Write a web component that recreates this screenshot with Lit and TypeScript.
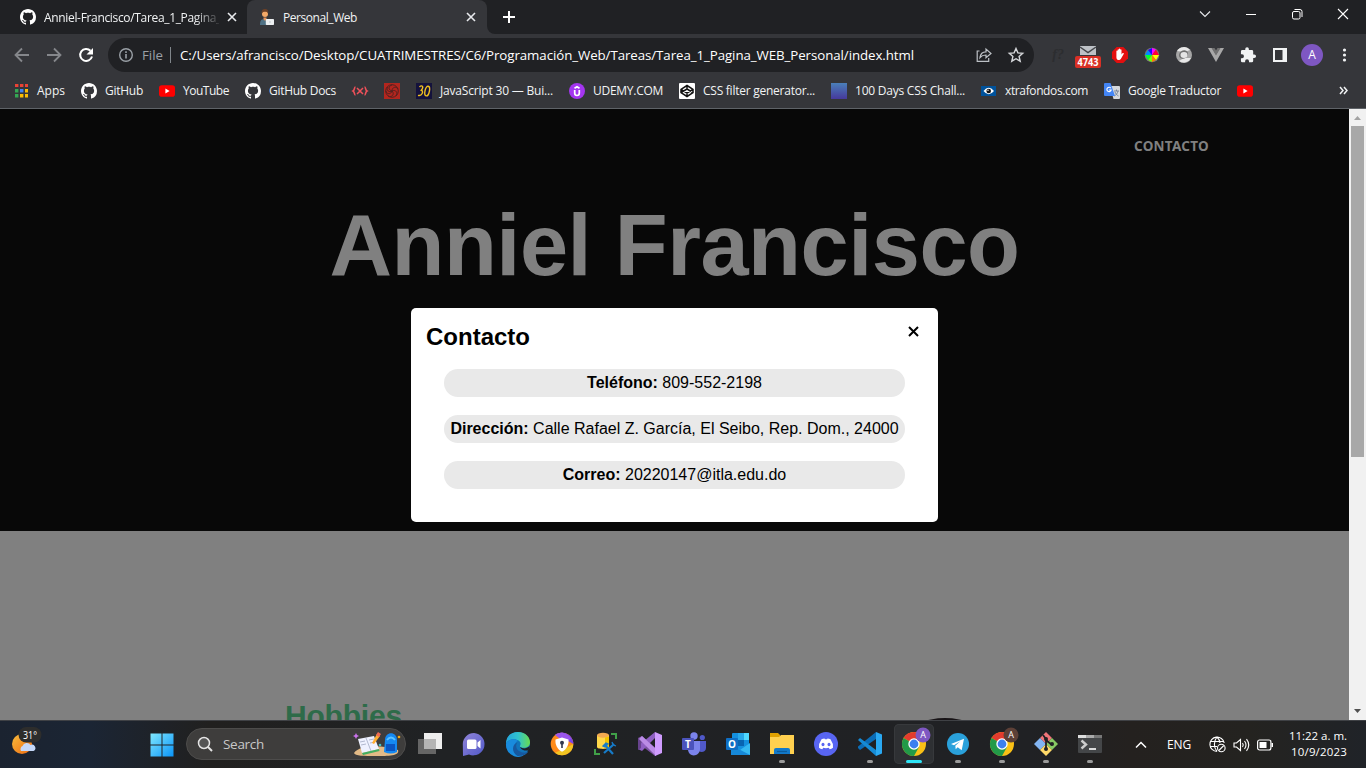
import { LitElement, html, svg, css } from "lit";
import { customElement, property } from "lit/decorators.js";

/* A one-line label that tracks its letters to fill a given width. */
@customElement("fit-label")
class FitLabel extends LitElement {
  @property() text = "";
  @property({ type: Number }) w = 0;
  static styles = css`
    :host { display: block; flex: none; white-space: pre; }
    span { display: inline-block; }
  `;
  render() {
    return html`<span>${this.text}</span>`;
  }
  updated() {
    const span = this.renderRoot.querySelector("span") as HTMLElement;
    this.style.width = `${this.w}px`;
    span.style.letterSpacing = "0px";
    const natural = span.getBoundingClientRect().width;
    span.style.letterSpacing = `${(this.w - natural) / this.text.length}px`;
  }
}

const github = svg`<svg width="16" height="16" viewBox="0 0 16 16"><path fill="#fff" d="M8 0C3.58 0 0 3.58 0 8c0 3.54 2.29 6.53 5.47 7.59.4.07.55-.17.55-.38 0-.19-.01-.82-.01-1.49-2.01.37-2.53-.49-2.69-.94-.09-.23-.48-.94-.82-1.13-.28-.15-.68-.52-.01-.53.63-.01 1.08.58 1.23.82.72 1.21 1.87.87 2.33.66.07-.52.28-.87.51-1.07-1.78-.2-3.64-.89-3.64-3.95 0-.87.31-1.59.82-2.15-.08-.2-.36-1.02.08-2.12 0 0 .67-.21 2.2.82.64-.18 1.32-.27 2-.27s1.36.09 2 .27c1.53-1.04 2.2-.82 2.2-.82.44 1.1.16 1.92.08 2.12.51.56.82 1.27.82 2.15 0 3.07-1.87 3.75-3.65 3.95.29.25.54.73.54 1.48 0 1.07-.01 1.93-.01 2.2 0 .21.15.46.55.38A8.01 8.01 0 0 0 16 8c0-4.42-3.58-8-8-8z"/></svg>`;
const youtube = svg`<svg width="16" height="16" viewBox="0 0 16 16"><rect y="2.3" width="16" height="11.4" rx="2.8" fill="#f00"/><path d="M6.4 5.6v4.8L10.600 8z" fill="#fff"/></svg>`;
const apps = svg`<svg width="16" height="16" viewBox="0 0 16 16">
  <path fill="#ea4335" d="M2 1h3.400v3H2zM7 1h3.400v3H7zM12 1h3v3h-3z"/><path fill="#34a853" d="M2 6h3.400v3.400H2zM2 11h3.400v3.400H2z"/><path fill="#4285f4" d="M7 6h3.400v3.400H7z"/><path fill="#fbbc05" d="M12 6h3v3.400h-3zM7 11h3.400v3.400H7zM12 11h3v3.400h-3z"/></svg>`;
const brackets = svg`<svg width="16" height="16" viewBox="0 0 16 16" fill="none" stroke="#f0515a" stroke-width="1.500"><path d="M3.500 4C2 4 3 7 1 8c2 1 1 4 2.500 4M12.500 4C14 4 13 7 15 8c-2 1-1 4-2.500 4M5 5l6 6M11 5l-6 6"/></svg>`;
const swirl = svg`<svg width="16" height="16" viewBox="0 0 16 16"><rect width="16" height="16" fill="#b3261e"/><g fill="none" stroke="#54211f" stroke-width="1"><circle cx="8" cy="8" r="6.300"/><path d="M8 8C4 7 4 3 8 2M8 8c0-4 4-5 6-2M8 8c4-2 6 2 4 5M8 8c3 3 0 7-4 5M8 8c-1 4-6 3-6 0M8 8C5 10 2 7 3.500 4"/></g></svg>`;
const thirty = svg`<svg width="16" height="16" viewBox="0 0 16 16"><rect width="16" height="16" fill="#14123c"/><g fill="none" stroke="#f0c020" stroke-width="1.400"><path d="M3.500 4c2-2.500 5-.6 1.800 3.300C8 8 6 13.500 2 12.300"/><ellipse cx="11.200" cy="8" rx="2.200" ry="4.900" transform="rotate(12 11 8)"/></g></svg>`;
const udemy = svg`<svg width="16" height="16" viewBox="0 0 16 16"><circle cx="8" cy="8" r="8" fill="#a435f0"/><path d="M5.500 5.200L8 3.700l2.500 1.500M5.700 7v3c0 3.300 4.600 3.300 4.600 0V7" fill="none" stroke="#fff" stroke-width="1.700"/></svg>`;
const codepen = svg`<svg width="16" height="16" viewBox="0 0 16 16"><rect width="16" height="16" rx="1" fill="#fff"/><path d="M8 2.500l6 3.800v3.400l-6 3.800-6-3.800V6.300zM2 6.300l6 3.700 6-3.700M2 9.700L8 6l6 3.700M8 2.500V6M8 10v3.500" fill="none" stroke="#111" stroke-width="1.500"/></svg>`;
const gradient = svg`<svg width="16" height="16"><defs><linearGradient id="hd" x1="0" y1="0" x2="0" y2="1"><stop stop-color="#4a7fb9"/><stop offset="1" stop-color="#46399c"/></linearGradient></defs><rect width="16" height="16" fill="url(#hd)"/></svg>`;
const eye = svg`<svg width="16" height="16" viewBox="0 0 16 16"><rect y="3" width="15" height="10" fill="#00529b"/><path d="M2.500 8q5.200-6.500 10.500 0-5.300 6.500-10.500 0" fill="#fff"/><circle cx="7.700" cy="8" r="2.300" fill="#111"/><circle cx="7" cy="7.300" r=".7" fill="#fff"/></svg>`;
const translate = svg`<svg width="16" height="16" viewBox="0 0 16 16"><path d="M6 3h9a1 1 0 0 1 1 1v11a1 1 0 0 1-1 1H9.500z" fill="#d5d8dc"/><path d="M10 8h5M12.500 6.500V8M14 8c-.5 2.500-2 4-3.500 5M11 9c.7 2 2 3 3.500 4" stroke="#6f7f94" stroke-width=".9" fill="none"/><path d="M1 0h5.500L11 13H1a1 1 0 0 1-1-1V1a1 1 0 0 1 1-1z" fill="#4385f5"/><path d="M7 5.300A2.200 2.200 0 1 0 7.200 7H5" fill="none" stroke="#fff" stroke-width="1.100"/></svg>`;

const bookmarks: [unknown, string, number][] = [
  [apps, "Apps", 28], [github, "GitHub", 38], [youtube, "YouTube", 46], [github, "GitHub Docs", 67],
  [brackets, "", 0], [swirl, "", 0], [thirty, "JavaScript 30 — Bui...", 113], [udemy, "UDEMY.COM", 70],
  [codepen, "CSS filter generator...", 112], [gradient, "100 Days CSS Chall...", 110],
  [eye, "xtrafondos.com", 83], [translate, "Google Traductor", 93], [youtube, "", 0],
];

const cross = svg`<svg width="10" height="10" viewBox="0 0 10 10"><path d="M1 1l8 8M9 1L1 9" stroke="#e8eaed" stroke-width="1.600"/></svg>`;
const person = svg`<svg width="16" height="16" viewBox="0 0 16 16"><path d="M1 16c0-4 1-6 4.500-6S10 12 10 16z" fill="#4f7185"/><circle cx="6" cy="5" r="3" fill="#f3a867"/><path d="M2.800 5C2 1 4 0 6 0s4 1 3 4.500C8.600 3 8 2.700 6 2.700S3.300 3 2.800 5" fill="#6b4027"/><path d="M4.500 8.500h3V10L6 12l-1.500-2z" fill="#e8955a"/><rect x="6.800" y="10" width="8.200" height="6" rx=".7" fill="#eceff1"/><circle cx="11" cy="13" r=".8" fill="#b7c0c5"/></svg>`;

const extensions = [
  svg`<svg width="32" height="24" viewBox="0 0 32 24"><path d="M8 3h16v9H8z" fill="#bdc1c6"/><path d="M8 4l8 5.500L24 4" fill="none" stroke="#44464a" stroke-width="1.500"/><rect x="3" y="13" width="26" height="12" rx="2" fill="#d93025"/><text x="16" y="23" text-anchor="middle" font-size="9.800" font-weight="700" textLength="21" lengthAdjust="spacingAndGlyphs" fill="#fff">4743</text></svg>`,
  svg`<svg width="32" height="24" viewBox="0 0 32 24"><path d="M12.700 4h6.600L24 8.700v6.600L19.300 20h-6.600L8 15.300V8.700z" fill="#e30f0f"/><path d="M12.400 12V8.300c0-1 1.200-1 1.200 0V7c0-1 1.300-1 1.300 0v-.7c0-1 1.300-1 1.300 0V7c0-1 1.300-1 1.300 0v4.500l.9-1.200c.9-.8 1.700 0 1.300.7l-2.300 4c-.7 1.500-1.600 2-2.800 2-1.900 0-2.200-1.500-2.200-3z" fill="#fff"/></svg>`,
  svg`<svg width="32" height="24" viewBox="0 0 32 24"><circle cx="16" cy="12" r="7.300" fill="#777"/><g><path d="M16 12V5l4 1.500z" fill="#f0f"/><path d="M16 12l4-5.500 3 5.500z" fill="#f03"/><path d="M16 12h7l-3 5z" fill="#ff0"/><path d="M16 12l4 5-4 2z" fill="#ff7b00"/><path d="M16 12v7l-4-2z" fill="#7f0"/><path d="M16 12l-4 5-3-5z" fill="#0f3"/><path d="M16 12H9l3-5z" fill="#08f"/><path d="M16 12l-4-5 4-2z" fill="#20f"/></g></svg>`,
  svg`<svg width="32" height="24" viewBox="0 0 32 24"><circle cx="16" cy="12" r="8" fill="#a5a5a5"/><path d="M9 8a8 8 0 0 1 13-1L17 9zM23 15a8 8 0 0 1-12 3l5-3z" fill="#e8e8e8"/><ellipse cx="15.500" cy="11.500" rx="4.800" ry="4" transform="rotate(-35 15.500 11.500)" fill="#707070"/><ellipse cx="16" cy="12" rx="3.500" ry="3" fill="#e4e4e4"/></svg>`,
  svg`<svg width="32" height="24" viewBox="0 0 32 24"><path d="M8 5h4l4 6.500L20 5h4l-8 14z" fill="#a8a8a8"/><path d="M11.500 5h3L16 7.500 17.500 5h3L16 12.500z" fill="#717171"/></svg>`,
  svg`<svg width="32" height="24" viewBox="0 0 32 24"><path transform="translate(7.500 3.500) scale(.72)" d="M20.500 11H19V7a2 2 0 0 0-2-2h-4V3.500a2.500 2.500 0 0 0-5 0V5H4a2 2 0 0 0-2 2v3.800h1.500a2.700 2.700 0 0 1 0 5.400H2V20a2 2 0 0 0 2 2h3.800v-1.500a2.700 2.700 0 0 1 5.400 0V22H17a2 2 0 0 0 2-2v-4h1.500a2.500 2.500 0 0 0 0-5z" fill="#f1f3f4"/></svg>`,
  svg`<svg width="32" height="24" viewBox="0 0 32 24"><path d="M9 5h14v14H9z" fill="#f1f3f4"/><path d="M11 7h7.500v10H11z" fill="#35363a"/></svg>`,
  svg`<svg width="32" height="24" viewBox="0 0 32 24"><circle cx="16" cy="12" r="11" fill="#7e57c2"/><text x="16" y="16.300" text-anchor="middle" font-size="12" fill="#fff">A</text></svg>`,
  svg`<svg width="32" height="24" viewBox="0 0 32 24" fill="#f1f3f4"><circle cx="16.500" cy="7" r="1.600"/><circle cx="16.500" cy="12" r="1.600"/><circle cx="16.500" cy="17" r="1.600"/></svg>`,
];

const chrome = (badge: string) => svg`<svg width="32" height="32" viewBox="0 0 32 32">
  <circle cx="16" cy="16" r="12" fill="#fbc116"/><path d="M16 16L5.600 10A12 12 0 0 1 26.400 10z" fill="#e33b2e"/><path d="M5.600 10A12 12 0 0 0 16 28l5-9-5-3z" fill="#229a48"/>
  <path d="M16 10.500h10.600" stroke="#e33b2e" stroke-width="1.500"/><circle cx="16" cy="16" r="5.700" fill="#fff"/><circle cx="16" cy="16" r="4.400" fill="#3c7ff0"/>
  <circle cx="25" cy="7" r="7.500" fill="${badge}"/><text x="25" y="10.300" font-size="9" text-anchor="middle" fill="#fff">A</text></svg>`;

const t = (body: unknown) => svg`<svg width="32" height="32" viewBox="0 0 32 32">${body}</svg>`;
/* state: 0 = closed, 1 = running, 2 = focused */
const tasks: [unknown, number][] = [
  [t(svg`<rect x="10" y="5" width="18" height="16" fill="#eeeeee"/><rect x="4" y="11" width="18" height="15" fill="#656565"/><path d="M10 11h12v10H10z" fill="#b4b4b4"/>`), 0],
  [t(svg`<defs><linearGradient id="ch" x1="0" x2="1" y2="1"><stop stop-color="#9184d8"/><stop offset="1" stop-color="#5059c9"/></linearGradient></defs><path d="M16 5a11.200 11.200 0 1 1-5 21.500L5 28l-.2-12A11.200 11.200 0 0 1 16 5z" fill="url(#ch)"/><rect x="9" y="11.500" width="9.500" height="9.500" rx="1.500" fill="#fff"/><path d="M19.500 14.500l3-2.500v8.500l-3-2.500z" fill="#fff"/>`), 0],
  [t(svg`<defs><linearGradient id="ed"><stop stop-color="#25a5dc"/><stop offset=".5" stop-color="#30c3cf"/><stop offset="1" stop-color="#68dc50"/></linearGradient></defs><circle cx="16" cy="16" r="12" fill="#1174ba"/><path d="M4 16C4 8 9 4 16 4c8 0 12 5.500 12 10.500 0 5-6 6.500-9.500 4.500-1.500-1 .5-1.500 0-4C18 11 7 8.500 4 16z" fill="url(#ed)"/><path d="M4 16c2-5 9-6 12-3-4 1-4 7-.5 10 3 2.500 7.500 2 10.500.5A12 12 0 0 1 4 16z" fill="#198bdd"/><path d="M15.500 14.500c-3 3-1 10 7 10 2 0 4-1 4-1-3 4-8 4.500-11 4.500-6-3-6-12 0-13.500z" fill="#17589f"/><path d="M18 19c3 2 6 2 10-1l-1.500 4.500c-4 .5-7-.5-8.500-3.500z" fill="#202224"/>`), 0],
  [t(svg`<circle cx="16" cy="16" r="11.300" fill="#ff8b1a"/><path d="M14 4.800A11.300 11.300 0 0 1 27.300 16l-7-4z" fill="#7c44e8"/><path d="M9 7c4-4 13-3 16 4l-8 2z" fill="#9b55ec"/><path d="M27.300 16A11.300 11.300 0 0 1 9 24.800L20 20z" fill="#f1c522"/><path d="M16 9.500l6.500 2c.5 5-1.500 9.500-6.500 12.300-5-2.800-7-7.300-6.500-12.300z" fill="#fff"/><circle cx="16" cy="14.800" r="2" fill="#303850"/><path d="M15.200 15h1.600v5h-1.600z" fill="#303850"/>`), 0],
  [t(svg`<path d="M7 7v12c0 2.500 12 2.500 12 0V7z" fill="#ffd84a"/><ellipse cx="13" cy="7.300" rx="6" ry="2.500" fill="#f2a950"/><path d="M15 9.500l4-1V19l-4 1z" fill="#f2c400"/><path d="M21 6h5v5M5 21v5h5" fill="none" stroke="#40a048" stroke-width="2"/><path d="M14 25l9-8M15 17l8 9" stroke="#167bc9" stroke-width="2.200"/><path d="M13 18l3-3 2 1-3 3zM22 14l1 3 3 1" stroke="#167bc9" fill="#167bc9" stroke-width="1.300"/>`), 0],
  [t(svg`<path d="M4 10l4-2 17 15-4 5L8 18l-4-2z" fill="#78509f"/><path d="M4 21l4 2 13-13V4L4 18z" fill="#8f5fc3"/><path d="M4 10l3 2v8l-3 2z" fill="#67438d"/><path d="M8 8l14 13v7L5 11z" fill="#bb8ce6"/><path d="M21 4l7 3v18l-7 3z" fill="#d09cff"/>`), 0],
  [t(svg`<circle cx="16" cy="8" r="3.700" fill="#7b83eb"/><circle cx="24.300" cy="9.500" r="2.600" fill="#5059c9"/><path d="M20 13h8v7c0 4-5 5-7 3z" fill="#5059c9"/><path d="M10 13h12v8c0 8-12 9-12 0z" fill="#7b83eb"/><rect x="4" y="10" width="12" height="12" rx="1" fill="#4b53bc"/><text x="10" y="19.700" text-anchor="middle" font-size="10" font-weight="700" fill="#fff">T</text>`), 0],
  [t(svg`<rect x="10" y="5" width="17" height="17" rx="1" fill="#1490df"/><path d="M16 5h6v7h-6z" fill="#28a8ea"/><path d="M22 5h5v7h-5z" fill="#50d9ff"/><path d="M10 12h12v6H10z" fill="#0864b1"/><path d="M28 15v12H9V17l9 5z" fill="#35b8f1"/><path d="M9 17l19 10H9z" fill="#1688d8"/><rect x="4" y="10" width="12" height="12" rx="1" fill="#0f6fc5"/><text x="10" y="19.700" text-anchor="middle" font-size="10" font-weight="700" fill="#fff">O</text>`), 0],
  [t(svg`<path d="M4 5h8l2 2v3H4z" fill="#e1a100"/><path d="M4 9h9l2-2h13v19H4z" fill="#ffd04f"/><path d="M8 26v-4q0-2 2-2h12q2 0 2 2v4z" fill="#1279ca"/><path d="M11 23.500h10" stroke="#0b5b9c" stroke-width="1.200"/>`), 1],
  [t(svg`<circle cx="16" cy="16" r="12" fill="#5865f2"/><path d="M11.500 11.300q1.500-.8 3-.9l.4.900h2.200l.4-.9q1.500.1 3 .9 3 4.300 2.500 8.500-1.500 1.200-3.300 1.500l-1-1.500q-2.700.7-5.400 0l-1 1.500q-1.800-.3-3.300-1.500-.5-4.200 2.500-8.500z" fill="#fff"/><ellipse cx="13" cy="16.500" rx="1.500" ry="1.700" fill="#5865f2"/><ellipse cx="19" cy="16.500" rx="1.500" ry="1.700" fill="#5865f2"/>`), 0],
  [t(svg`<path d="M22 4v7L6 22l-2-2v-1.500z" fill="#0b6db7"/><path d="M4 12l2-2 16 12v6z" fill="#168bd5"/><path d="M22 4l6 2.500v19L22 28z" fill="#2aa9f2"/>`), 1],
  [chrome("#7e57c2"), 2],
  [t(svg`<circle cx="16" cy="16" r="11" fill="#2aa1db"/><path d="M9 16l13-5.300-2.300 11.500-4-3-2 2-.4-3.500 5-4.500-6.300 4z" fill="#fff"/>`), 1],
  [chrome("#5d4037"), 1],
  [t(svg`<path d="M16 4l6 6-6 6-6-6z" fill="#f07478"/><path d="M10 10l6 6-6 6-6-6z" fill="#82b4f2"/><path d="M22 10l6 6-6 6-6-6z" fill="#87c963"/><path d="M16 16l6 6-6 6-6-6z" fill="#ffd968"/><path d="M13 7l3 4v11M16 12l6 5" fill="none" stroke="#202124" stroke-width="1.800"/><circle cx="16" cy="11" r="2" fill="#202124"/><circle cx="22" cy="16" r="2" fill="#202124"/><circle cx="16" cy="21" r="2" fill="#202124"/>`), 1],
  [t(svg`<rect x="4" y="7" width="24" height="18" rx="1" fill="#444648"/><path d="M4 7h8v3H4z" fill="#ddd"/><path d="M12 7h8v3h-8z" fill="#aaa"/><path d="M20 7h8v3h-8z" fill="#777"/><path d="M7.500 12.500l4.500 4-4.500 4" fill="none" stroke="#ccc" stroke-width="2.400"/><path d="M15 21h7" stroke="#fff" stroke-width="1.600"/>`), 1],
];

const weather = svg`<svg width="34" height="32" viewBox="0 0 34 32"><defs><linearGradient id="mo" x1="0" y1="0" x2="1" y2="1"><stop stop-color="#f9bd3c"/><stop offset="1" stop-color="#ee6a12"/></linearGradient></defs><circle cx="11" cy="17" r="10" fill="url(#mo)"/><path d="M10 24a3.500 3.500 0 0 1 1.500-5 4.500 4.500 0 0 1 8-1 3 3 0 0 1 3 6z" fill="#c5d8f8"/><rect x="7.500" y="0" width="23" height="15.500" rx="7.700" fill="#2d2d2c"/><text x="12" y="11.500" font-size="10.500" textLength="14" lengthAdjust="spacingAndGlyphs" fill="#fff">31°</text></svg>`;
const searchArt = svg`<svg width="48" height="26" viewBox="0 0 48 26"><path d="M1 22c6-9 30-8 44-3 2 6-10 6-22 6S2 25 1 22z" fill="#e3ba86"/><path d="M5 8l16-3 5 13-17 4z" fill="#eef1ff"/><path d="M13 7l5 13M7 11l5-1M8 14l5-1M16 9l5-1M17 12l5-1" stroke="#aab2ca" stroke-width=".9"/><path d="M9 22l17-4 .5 2L10 24z" fill="#42ae62"/><path d="M19 12l5-9 3 2-6 8z" fill="#ffad31"/><path d="M23 4l2-3 3 2-2 3z" fill="#f06a52"/><path d="M32 9c0-9 12-9 12 0v12q-6 3-13 0z" fill="#1589f2"/><path d="M33 13h9v7h-9z" fill="#0b55c2"/><path d="M34 9q4-5 8 0" fill="none" stroke="#5cc4ff" stroke-width="2"/><path d="M3 2l1 2 2 1-2 1-1 2-1-2-2-1 2-1z" fill="#cb72ed"/><circle cx="27" cy="14" r="1.300" fill="#44c1c7"/><circle cx="46" cy="6" r="1.300" fill="#f6ab12"/></svg>`;

@customElement("app-root")
class AppRoot extends LitElement {
  static styles = css`
    :host { display: flex; flex-direction: column; width: 1366px; height: 768px; overflow: hidden; font-family: "Open Sans", "Noto Sans", sans-serif; font-size: 12px; color: #f1f3f4; background: #35363a; }
    * { box-sizing: border-box; }
    svg { display: block; flex: none; overflow: visible; font-family: "Open Sans", "Noto Sans", sans-serif; }
    .tabs { display: flex; height: 34px; flex: none; background: #202124; }
    .tab { display: flex; align-items: center; height: 34px; }
    .tab.back { width: 247px; padding-left: 20px; gap: 8px; }
    .tab.back .fade { width: 175px; overflow: hidden; mask-image: linear-gradient(90deg, #000 150px, transparent 178px); }
    .tab.front { width: 240px; padding: 0 11px 0 12px; gap: 8px; background: #35363a; border-radius: 8px 8px 0 0; }
    .grow { flex: 1; }
    .plus { display: flex; align-items: center; padding-left: 16px; flex: 1; background: #202124; border-bottom-left-radius: 8px; }
    .corner { background: #35363a; display: flex; flex: 1; }
    .controls { background: #202124; }
    .win { display: flex; align-items: center; gap: 32px; padding-right: 16px; height: 28px; }
    .bar { display: flex; align-items: center; height: 42px; flex: none; }
    .nav { display: flex; width: 108px; padding-left: 14px; gap: 16px; }
    .omni { display: flex; align-items: center; width: 926px; height: 34px; border-radius: 17px; background: #202124; padding: 0 10px; font-size: 13.300px; }
    .omni .file { color: #9aa0a6; margin-left: 8px; }
    .sep { width: 1px; height: 16px; background: #80868b; margin: 0 9px 0 7px; }
    .omni .url { color: #fff; }
    .star { margin: 0 0 0 16px; }
    .ext { display: flex; flex: 1; justify-content: flex-end; margin-right: 6px; }
    .ghost { color: #2c2d30; font: italic 700 14px "Liberation Serif", serif; align-self: center; margin-right: 8px; }
    .marks { display: flex; align-items: center; height: 32px; flex: none; padding: 0 18px 3px 13px; gap: 16px; }
    .mark { display: flex; align-items: center; gap: 8px; font-size: 12px; }
    .mark svg { margin-top: 1px; }
    .view { display: flex; flex: 1; min-height: 0; border-top: 1px solid #5f6368; position: relative; font-family: "Liberation Sans", Arial, sans-serif; }
    .page { width: 1349px; background: #808080; overflow: hidden; }
    .hero { height: 422px; background: #080808; display: flex; flex-direction: column; align-items: center; }
    .link { align-self: flex-end; margin: 29px 140px 0 0; color: #808080; font: 700 13.500px/17px "Noto Sans", sans-serif; }
    .name { color: #808080; font-weight: 700; font-size: 86.600px; line-height: 100px; margin-top: 40px; }
    .section { display: flex; align-items: flex-start; padding: 168px 0 0 285px; }
    .hobbies { color: #2e6b49; font-weight: 700; font-size: 30px; line-height: 34px; }
    .photo { width: 144px; height: 144px; flex: none; border-radius: 50%; background: #171316; margin: 19px 0 0 471px; }
    .scroll { width: 17px; background: #f1f1f1; display: flex; flex-direction: column; align-items: center; }
    .arrow { width: 17px; height: 17px; }
    .thumb { width: 13px; height: 331px; background: #a8a8a8; }
    .modal { position: absolute; left: 411px; top: 199px; width: 527px; height: 214px; background: #fff; border-radius: 5px; color: #000; padding: 15px 15px 0; }
    .head { display: flex; justify-content: space-between; font-weight: 700; font-size: 24px; line-height: 27px; }
    .head svg { margin: 3px 4px 0 0; }
    .rows { display: flex; flex-direction: column; gap: 18px; padding: 19px 18px 0; }
    .row { height: 28px; border-radius: 14px; background: #e9e9e9; text-align: center; font-size: 16px; line-height: 27px; white-space: nowrap; }
    .task { display: flex; align-items: center; height: 48px; flex: none; border-top: 1px solid #3f4145; background: linear-gradient(90deg, #1b2330 0, #1b2534 90px, #21201f 210px, #202224 440px, #202124 1030px, #24211f 1130px, #242320 1250px, #202328 1366px); }
    .left { width: 137px; padding: 0 0 3px 11px; }
    .start { width: 49px; padding-left: 12.500px; }
    .search { display: flex; align-items: center; width: 220px; height: 32px; border-radius: 16px; background: #3e3d3c; border: 1px solid #4d4c4b; padding: 0 4px 0 10px; font-size: 13.500px; color: #c8c8c8; gap: 10px; margin-bottom: 1px; }
    .apps { display: flex; padding-left: 2px; }
    .app { display: flex; flex-direction: column; align-items: center; width: 44px; height: 47px; padding-top: 7px; }
    .tile { width: 40px; height: 40px; display: flex; justify-content: center; flex-direction: column; align-items: center; margin-top: -4px; border-radius: 5px; }
    .tile.on { background: #2e3033; box-shadow: inset 0 0 0 1px #37393c; }
    .dot { width: 6px; height: 3px; border-radius: 2px; background: #9b9b9b; margin-top: -4px; }
    .dot.on { width: 16px; background: #2fe5f7; }
    .tray { display: flex; align-items: center; flex: 1; padding-left: 23px; color: #fff; }
    .lang { margin-left: 20px; }
    .net { margin-left: 18px; }
    .status { margin-left: 7px; }
    .clock { display: flex; flex-direction: column; align-items: flex-end; flex: 1; padding: 0 19px 1px 0; font-size: 11.500px; line-height: 16px; }
  `;
  render() {
    return html`
      <div class="tabs">
        <div class="tab back">${github}<div class="fade"><fit-label text="Anniel-Francisco/Tarea_1_Pagina_" w="177"></fit-label></div>${cross}</div>
        <div class="tab front">${person}<fit-label text="Personal_Web" w="74"></fit-label><div class="grow"></div>${cross}</div>
        <div class="corner"><div class="plus">
          <svg width="12" height="12" viewBox="0 0 12 12"><path d="M6 0v12M0 6h12" stroke="#fff" stroke-width="2"/></svg>
        </div></div>
        <div class="controls"><div class="win">
          <svg width="14" height="12" viewBox="-1 0 14 12"><path d="M1 3.500l5 5 5-5" fill="none" stroke="#e8eaed" stroke-width="1.100"/></svg>
          <svg width="14" height="12" viewBox="0 0 14 12"><path d="M2 6.500h10" stroke="#fff"/></svg>
          <svg width="14" height="12" viewBox="0 0 14 12"><g fill="none" stroke="#fff"><rect x="2.500" y="3.500" width="7.500" height="7.500" rx="1.500"/><path d="M4.500 1.500H10q2 0 2 2V9"/></g></svg>
          <svg width="14" height="12" viewBox="-1 0 14 12"><path d="M1 1l10 10M11 1L1 11" stroke="#fff" stroke-width="1.100"/></svg>
        </div></div>
      </div>
      <div class="bar">
        <div class="nav">
          <svg width="16" height="16" viewBox="0 0 16 16"><path d="M15 8H2M8 1.500L1.500 8 8 14.500" fill="none" stroke="#85878b" stroke-width="1.800"/></svg>
          <svg width="16" height="16" viewBox="0 0 16 16"><path d="M1 8h13M8 1.500L14.500 8 8 14.500" fill="none" stroke="#85878b" stroke-width="1.800"/></svg>
          <svg width="16" height="16" viewBox="0 0 16 16"><path d="M12.500 3.700A6 6 0 1 0 14 9.500" fill="none" stroke="#fff" stroke-width="2"/><path d="M15 1v6.500H8.500z" fill="#fff"/></svg>
        </div>
        <div class="omni">
          <svg width="16" height="16" viewBox="0 0 16 16"><circle cx="8" cy="8" r="6.300" fill="none" stroke="#9aa0a6" stroke-width="1.400"/><path d="M7.200 7h1.600v4.500H7.200zM7.200 4.300h1.600V6H7.200z" fill="#9aa0a6"/></svg>
          <fit-label class="file" text="File" w="21"></fit-label><div class="sep"></div>
          <fit-label class="url" text="C:/Users/afrancisco/Desktop/CUATRIMESTRES/C6/Programación_Web/Tareas/Tarea_1_Pagina_WEB_Personal/index.html" w="734"></fit-label>
          <div class="grow"></div>
          <svg width="16" height="16" viewBox="0 0 16 16" fill="none" stroke="#bdc1c6" stroke-width="1.200"><path d="M3.500 4H1.200v10.300h11.500V11"/><path d="M4 10.500C4.500 6.500 7 4.800 10 4.800V2l5 4.500-5 4.300V8C7.500 8 5.500 8.700 4 10.500z"/></svg>
          <svg class="star" width="16" height="16" viewBox="0 0 16 16"><path d="M8 1.500l1.900 4.400 4.800.4-3.600 3.200 1.100 4.700L8 11.700l-4.200 2.500 1.100-4.700L1.300 6.300l4.800-.4z" fill="none" stroke="#d5d7da" stroke-width="1.400"/></svg>
        </div>
        <div class="ext"><span class="ghost">f?</span>${extensions}</div>
      </div>
      <div class="marks">
        ${bookmarks.map(([icon, text, w]) => html`<div class="mark">${icon}${text ? html`<fit-label text=${text} w=${w}></fit-label>` : ""}</div>`)}
        <div class="grow"></div>
        <svg width="9" height="9" viewBox="0 0 9 9"><path d="M1 1l3 3.500L1 8M5 1l3 3.500L5 8" fill="none" stroke="#f1f3f4" stroke-width="1.500"/></svg>
      </div>
      <div class="view">
        <div class="page">
          <div class="hero">
            <fit-label class="link" text="CONTACTO" w="75"></fit-label>
            <fit-label class="name" text="Anniel Francisco" w="690"></fit-label>
          </div>
          <div class="section">
            <fit-label class="hobbies" text="Hobbies" w="117"></fit-label>
            <div class="photo"></div>
          </div>
        </div>
        <div class="scroll">
          <svg class="arrow" viewBox="0 0 17 17"><path d="M5 11h7L8.500 7z" fill="#a3a3a3"/></svg>
          <div class="thumb"></div><div class="grow"></div>
          <svg class="arrow" viewBox="0 0 17 17"><path d="M5 6h7l-3.500 4z" fill="#505050"/></svg>
        </div>
        <div class="modal">
          <div class="head"><fit-label text="Contacto" w="104"></fit-label><svg width="11" height="11" viewBox="0 0 11 11"><path d="M1 1l9 9M10 1l-9 9" stroke="#000" stroke-width="2"/></svg></div>
          <div class="rows">
            <div class="row"><b>Teléfono:</b> 809-552-2198</div>
            <div class="row"><b>Dirección:</b> Calle Rafael Z. García, El Seibo, Rep. Dom., 24000</div>
            <div class="row"><b>Correo:</b> 20220147@itla.edu.do</div>
          </div>
        </div>
      </div>
      <div class="task">
        <div class="left">${weather}</div>
        <div class="start"><svg width="24" height="24" viewBox="0 0 24 24"><defs><linearGradient id="wi" x1="0" y1="0" x2="1" y2="1"><stop stop-color="#80e8ff"/><stop offset="1" stop-color="#0a94f8"/></linearGradient></defs><path d="M.5.500h11v11H.5zM12.500.500h11v11h-11zM.5 12.500h11v11H.5zM12.500 12.500h11v11h-11z" fill="url(#wi)"/></svg></div>
        <div class="search">
          <svg width="16" height="16" viewBox="0 0 16 16"><circle cx="7" cy="7" r="5.500" fill="#555" stroke="#e5e5e5" stroke-width="1.500"/><path d="M11 11l4 4" stroke="#e5e5e5" stroke-width="2"/></svg>
          <fit-label text="Search" w="41"></fit-label><div class="grow"></div>${searchArt}
        </div>
        <div class="apps">
          ${tasks.map(([icon, state]) => html`<div class="app"><div class="tile ${state === 2 ? "on" : ""}">${icon}</div>${state ? html`<div class="dot ${state === 2 ? "on" : ""}"></div>` : ""}</div>`)}
        </div>
        <div class="tray">
          <svg width="12" height="12" viewBox="0 0 12 12"><path d="M1 8.500l5-5 5 5" fill="none" stroke="#fff" stroke-width="1.500"/></svg>
          <fit-label class="lang" text="ENG" w="24"></fit-label>
          <svg class="net" width="17" height="17" viewBox="0 0 17 17" fill="none" stroke="#fff" stroke-width="1.100"><path d="M8 15.500A7.200 7.200 0 1 1 15.200 7M1 5.500h13.500M1 10.500h7M8 1C4.500 5 4.500 11.500 8 15.500M8 1c2 2 3 4 3 6"/><circle cx="12.300" cy="12" r="3.800"/><path d="M9.800 14.500l5-5"/></svg>
          <svg class="status" width="17" height="16" viewBox="0 0 17 16" fill="none" stroke="#fff" stroke-width="1.100"><path d="M1 6v4h2.500l4 3.500v-11L3.500 6zM9.500 6q1.500 2 0 4M11.500 4q3 4 0 8M13.500 2.200q4.500 5.800 0 11.600"/></svg>
          <svg class="status" width="17" height="12" viewBox="0 0 17 12"><rect x=".6" y="1" width="13.300" height="10" rx="2" fill="none" stroke="#fff" stroke-width="1.200"/><path d="M2.500 3h7v6h-7zM14.500 4H16v4h-1.500z" fill="#fff"/></svg>
          <div class="clock"><fit-label text="11:22 a. m." w="58"></fit-label><fit-label text="10/9/2023" w="56"></fit-label></div>
        </div>
      </div>
    `;
  }
}
